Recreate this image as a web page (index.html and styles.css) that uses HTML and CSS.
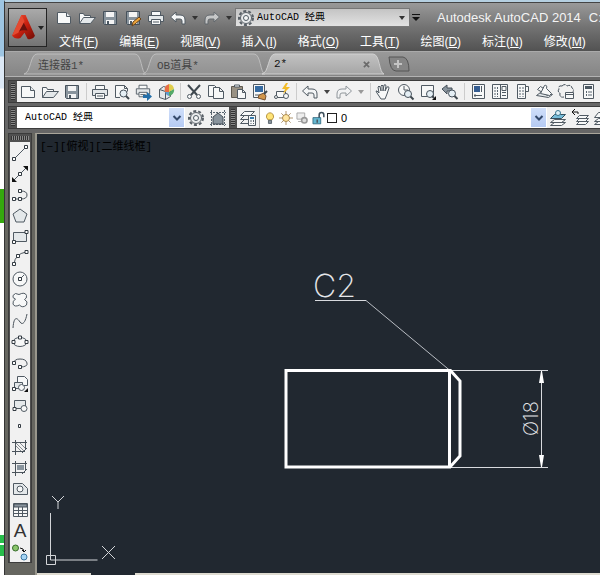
FILE: index.html
```html
<!DOCTYPE html>
<html lang="zh-CN">
<head>
<meta charset="utf-8">
<title>Autodesk AutoCAD 2014</title>
<link rel="stylesheet" href="styles.css">
</head>
<body>
<svg class="sprite" aria-hidden="true">
  <defs>
    <linearGradient id="red" x1="0" y1="0" x2="1" y2="1"><stop offset="0" stop-color="#f0563a"/><stop offset=".5" stop-color="#c9200f"/><stop offset="1" stop-color="#6e0c06"/></linearGradient>
    <linearGradient id="tabfill" x1="0" y1="0" x2="0" y2="1"><stop offset="0" stop-color="#a2a2a2"/><stop offset="1" stop-color="#929292"/></linearGradient>
    <linearGradient id="tabon" x1="0" y1="0" x2="0" y2="1"><stop offset="0" stop-color="#c2c2c2"/><stop offset="1" stop-color="#a6a6a6"/></linearGradient>
  </defs>
  <symbol id="new" viewBox="0 0 18 18"><path class="paper" d="M2.500 3.500h9l4 4v7h-13z"/><path class="fill-soft" d="M11.500 3.500v4h4"/></symbol>
  <symbol id="open" viewBox="0 0 18 18"><path class="paper" d="M1.500 14.500v-10h4l1 2h6v3"/><path class="fill-soft" d="M1.500 14.500l4-6h12l-5 6z"/></symbol>
  <symbol id="save" viewBox="0 0 18 18"><path class="metal" d="M2.500 2.500h13v13h-12l-1-1z"/><path class="plain" d="M5 3h8v5H5zM5 11h8v4H5z"/><path class="dark" d="M6 12h2v3H6z"/></symbol>
  <symbol id="saveas" viewBox="0 0 18 18"><use href="#save"/><path d="M8 17l1-4 6-5 2 2-6 5z" fill="#eda63c" stroke="#694116"/></symbol>
  <symbol id="print" viewBox="0 0 18 18"><path class="paper" d="M4.500 6V2.500h9V6"/><path class="fill-soft" d="M1.500 6.500h15v6h-15z"/><path class="paper" d="M4.500 10.500h9v5h-9z"/><path class="line" d="M6 13h6"/></symbol>
  <symbol id="preview" viewBox="0 0 18 18"><path class="paper" d="M2.500 14.500v-12h9l3 3v3M7 14.500H2.500M11.500 2.500v3h3"/><circle class="lens" cx="10.500" cy="10.500" r="3.500"/><path class="thick" d="M13 13l3 3"/></symbol>
  <symbol id="publish" viewBox="0 0 18 18"><use href="#print" width="16" height="16"/><path d="M8 12h4V9l5 4.500-5 4.500v-3H8z" fill="#246fa9"/></symbol>
  <symbol id="dwf" viewBox="0 0 18 18"><path class="fill-soft" d="M2.500 6.500l4-3 7 2v8l-5 3-6-2zM2.500 6.500l6 2v8"/><path d="M12 1a6 6 0 0 0-4 8h4z" fill="#e86e45"/><path d="M12 1a6 6 0 0 1 5 5l-5 3z" fill="#e0ce4c"/><path d="M17 6a6 6 0 0 1-5 7V9z" fill="#54aa69"/><path d="M8 9a6 6 0 0 0 4 4V9z" fill="#629dcd"/></symbol>
  <symbol id="cut" viewBox="0 0 18 18"><path class="thick" d="M3 2l9 10M15 2L6 12"/><circle class="paper" cx="4.500" cy="13.500" r="2"/><circle class="paper" cx="13.500" cy="13.500" r="2"/></symbol>
  <symbol id="copy" viewBox="0 0 18 18"><path class="paper" d="M1.500 2.500h6l3 3v8h-9z"/><path class="paper" d="M6.500 4.500h6l4 4v7h-10zM12.500 4.500v4h4"/></symbol>
  <symbol id="paste" viewBox="0 0 18 18"><path d="M2.500 3.500h11v11h-11z" fill="#9a9284" stroke="#5f5a50"/><path class="paper" d="M5.500 2h5v2h-5zM8.500 6.500h5l3 3v6h-8zM13.500 6.500v3h3"/></symbol>
  <symbol id="match" viewBox="0 0 18 18"><path class="paper" d="M2.500 1.500h11v13h-11z"/><path d="M4 3h8v6H4z" fill="#376ca3"/><path class="line" d="M4 12h4"/><path d="M8 12l5-2 2 3-1 4-7-2z" fill="#d1964b" stroke="#745030"/><path class="thick" d="M13 11l3-3"/></symbol>
  <symbol id="block" viewBox="0 0 18 18"><path class="paper" d="M3.500 8.500h9v6h-9z"/><circle class="paper" cx="13" cy="13" r="2.500"/><circle class="paper" cx="3" cy="14" r="1.500"/><path d="M13 0l-4 6h3l-2 5 7-7h-4l2-4z" fill="#f2bb27"/></symbol>
  <symbol id="undo" viewBox="0 0 18 18"><path class="arrow" d="M1.500 8L7 3v3h4q5 0 5 5v4h-3v-3q0-2-2-2H7v3z"/></symbol>
  <symbol id="redo" viewBox="0 0 18 18"><path class="arrow" d="M16.500 8L11 3v3H7q-5 0-5 5v4h3v-3q0-2 2-2h4v3z"/></symbol>
  <symbol id="pan" viewBox="0 0 18 18"><path class="paper" d="M6 16l-4-6q-2-3 0-2l2 2L3 4q1-2 2 0l1 4V3q1-2 2 0v5l1-6q2-1 2 1l-1 5 2-4q2-1 2 1l-2 6-2 5z"/></symbol>
  <symbol id="zoomrt" viewBox="0 0 18 18"><circle class="paper" cx="7" cy="7" r="5.500"/><path class="line" d="M7 3v4h4"/><circle class="lens" cx="11" cy="11" r="3.500"/><path class="thick" d="M13.500 13.500l3 3"/></symbol>
  <symbol id="zoomwin" viewBox="0 0 18 18"><path class="paper" d="M2.500 2.500h12v11h-12z"/><circle class="lens" cx="11" cy="11" r="3.500"/><path class="thick" d="M13 13l2 2"/><path class="black" d="M17 13v4h-4z"/></symbol>
  <symbol id="zoomprev" viewBox="0 0 18 18"><path class="metal" d="M1 6l5-4v3h5v3H6v3z"/><circle class="lens" cx="11" cy="10.500" r="3.500"/><path class="thick" d="M13.500 13l3 3"/></symbol>
  <symbol id="props" viewBox="0 0 18 18"><path class="paper" d="M3.500 1.500h12v14h-12z"/><path d="M5 3h6v6H5z" fill="#345c91"/><path class="line" d="M12.500 3v6M5 12.500h8M6 11v3"/></symbol>
  <symbol id="center" viewBox="0 0 18 18"><path class="paper" d="M1.500 1.500h15v14h-15zM9.500 2v13"/><path class="dots" d="M4 4v10M6.500 4v10"/><path class="line" d="M11 3.500h4v4h-4zM11 9.500h4M11 12.500h4"/></symbol>
  <symbol id="palette" viewBox="0 0 18 18"><path class="paper" d="M4.500 1.500h8v14h-8zM12.500 3.500h3v5h-3"/><path class="dots" d="M7 4v10M10 4v10"/></symbol>
  <symbol id="sheets" viewBox="0 0 18 18"><path class="fill-soft" d="M1.500 12.500l12 2 4-3-12-2z"/><path class="paper" d="M2.500 6.500l3-3 9 6-2 3z"/><path class="paper" d="M5.500 10.500l4-8q3-1 2 3l5 5-2 2z"/></symbol>
  <symbol id="markup" viewBox="0 0 18 18"><path class="cloud" d="M5 3q3-3 5 0 4-2 5 2 3 2 0 5M5 3Q1 2 2 6q-2 3 1 4-1 5 4 4"/><path class="paper" d="M8.500 9.500h8v6h-8zM8.500 11.500h8"/></symbol>
  <symbol id="calc" viewBox="0 0 18 18"><path class="paper" d="M4.500 1.500h10v14h-10z"/><path class="dark" d="M6 3h7v3H6z"/><path class="dots" d="M7.500 8v6M10 8v6M12 8v6"/></symbol>
  <symbol id="gear" viewBox="0 0 18 18"><circle class="teeth" cx="9" cy="9" r="7"/><circle class="ring" cx="9" cy="9" r="5.500"/><circle class="paper" cx="9" cy="9" r="2.500"/></symbol>
  <symbol id="house" viewBox="0 0 18 18"><path class="dots" d="M1 3.500h16M1 15.500h16M2.500 1v16M15.500 1v16"/><path class="metal" d="M4 8l5-4 5 4v7H4z"/></symbol>
  <symbol id="layers" viewBox="0 0 18 18"><path class="paper" d="M1.500 6.500l4-4h10l-4 4z"/><path class="line" d="M9 10.500H1.500l4-4M9 14.500H1.500l4-4"/><path class="paper" d="M9.500 6.500h7v10h-7z"/><path d="M11 8h4v2h-4z" fill="#387cad"/><path class="dots" d="M12 11v4M14.500 11v4"/></symbol>
  <symbol id="bulb" viewBox="0 0 18 18"><path d="M6.500 11.500Q3 8 5 4.500 9 0 13 4.500q2 3.500-1.500 7z" fill="#ffe478" stroke="#a47c28"/><path class="metal" d="M7 12h4v4H7z"/></symbol>
  <symbol id="sun" viewBox="0 0 18 18"><path d="M9 0v18M0 9h18M3 3l12 12M15 3L3 15" stroke="#987846"/><circle cx="9" cy="9" r="4.500" fill="#ffe6a0" stroke="#9c7535"/></symbol>
  <symbol id="freeze" viewBox="0 0 18 18"><path d="M2.500 2.500h10v8h-10zM4 13.500h6" fill="#eee" stroke="#999"/><circle cx="12" cy="12" r="3.500" fill="#ddd" stroke="#999" stroke-width="2"/></symbol>
  <symbol id="lock" viewBox="0 0 18 18"><path d="M10.500 9V5q0-3 3-3t3 3v3" fill="none" stroke="#41525e" stroke-width="2"/><path d="M2.500 8.500h10v8h-10z" fill="#65b8d1" stroke="#285f77"/><path class="dark" d="M7 11h2v4H7z"/></symbol>
  <symbol id="laycur" viewBox="0 0 18 18"><path class="paper" d="M1.500 16.500l4-3h11l-4 3zM1.500 13.500l4-3h11l-4 3z"/><path d="M1.500 9.500l4-4h11l-4 4z" fill="#77bcd8" stroke="#34505f"/><circle cx="9" cy="4" r="2.500" fill="#ddeff6" stroke="#397790"/></symbol>
  <symbol id="layprev" viewBox="0 0 18 18"><path class="paper" d="M5.500 15.500l3-3h9l-3 3zM5.500 12.500l3-3h9l-3 3zM5.500 9.500l3-3h9l-3 3z"/><path d="M7 5V3H2M4 0L1 3l3 3" fill="none" stroke="#111"/></symbol>
  <symbol id="laystate" viewBox="0 0 18 18"><path class="paper" d="M1.500 15.500l4-3h11l-4 3zM1.500 12.500l4-3h11l-4 3zM1.500 8.500l4-5h11l-4 5z"/></symbol>
  <symbol id="line" viewBox="0 0 18 18"><path class="line" d="M3 15L15 3"/><path class="node" d="M1.500 13.500h3v3h-3zM13.500 1.500h3v3h-3z"/></symbol>
  <symbol id="xline" viewBox="0 0 18 18"><path class="line" d="M3 15L15 3"/><path class="black" d="M1 12v5h5zM12 1h5v5z"/><path class="node" d="M7.500 7.500h3v3h-3z"/></symbol>
  <symbol id="pline" viewBox="0 0 18 18"><path class="line2" d="M3 13h7q6 0 6-4t-6-4"/><path class="node" d="M1.500 11.500h3v3h-3zM7.500 11.500h3v3h-3zM7.500 3.500h3v3h-3z"/></symbol>
  <symbol id="polygon" viewBox="0 0 18 18"><path class="fill-soft" d="M9 2l7 5-3 8H5L2 7z"/></symbol>
  <symbol id="rect" viewBox="0 0 18 18"><path class="fill-soft" d="M2.500 4.500h13v9h-13z"/><path class="node" d="M1.500 12.500h3v3h-3zM14 2.500h3v3h-3z"/></symbol>
  <symbol id="arc" viewBox="0 0 18 18"><path class="line2" d="M3 15Q4 5 15 3"/><path class="node" d="M1.500 13.500h3v3h-3zM5.500 5.500h3v3h-3zM14 1.500h3v3h-3z"/></symbol>
  <symbol id="circle" viewBox="0 0 18 18"><circle class="paper" cx="9" cy="9" r="7"/><path class="line" d="M9 9l4-4"/><path class="node" d="M7.500 7.500h3v3h-3z"/></symbol>
  <symbol id="revcloud" viewBox="0 0 18 18"><path class="paper" d="M4.500 8Q1 7 2 4.500 4 1 8 3.500q6-3 7.500 1 .5 3-2 4 4 2 2 5.500-4 3.500-7 0-5 2.500-6.500-1-.5-3 2.500-5z"/></symbol>
  <symbol id="spline" viewBox="0 0 18 18"><path class="line2" d="M2 16C3 2 7 7 9 10s5 2 7-8"/></symbol>
  <symbol id="ellipse" viewBox="0 0 18 18"><ellipse class="paper" cx="9" cy="9" rx="7" ry="4.500"/><path class="node" d="M1 7.500h3v3H1zM14 7.500h3v3h-3zM7.500 3h3v3h-3z"/></symbol>
  <symbol id="ellarc" viewBox="0 0 18 18"><path class="line2" d="M3 9q0-4 6-4t7 4-7 4"/><path class="node" d="M1.500 7.500h3v3h-3zM7.500 11.500h3v3h-3z"/></symbol>
  <symbol id="insert" viewBox="0 0 18 18"><path class="paper" d="M6.500 7V1.500h7l3 3v6h-4"/><path class="fill-soft" d="M3.500 7.500h8v6h-8z"/><path class="node" d="M1.500 12.500h3v3h-3z"/><circle class="paper" cx="10.500" cy="12.500" r="3"/><path class="black" d="M17 13v4h-4z"/></symbol>
  <symbol id="mkblock" viewBox="0 0 18 18"><path class="fill-soft" d="M3.500 4.500h11v8h-11z"/><path class="node" d="M2 11.500h3v3H2z"/><circle class="paper" cx="13" cy="12.500" r="3"/></symbol>
  <symbol id="point" viewBox="0 0 18 18"><path class="node" d="M7.500 7.500h2v3h-2z"/></symbol>
  <symbol id="hatch" viewBox="0 0 18 18"><path class="line2" d="M1 4.500h15M1 13.500h13M4.500 2v15M14.500 2v9"/><path class="hair" d="M5 8l5 5M5 5l8 8M9 5l5 5"/><path class="line2" d="M11 15l5-5"/></symbol>
  <symbol id="gradient" viewBox="0 0 18 18"><path d="M6 6h7v5H6z" fill="#89949d"/><path class="line2" d="M1 4.500h15M1 13.500h13M4.500 2v15M14.500 2v9"/><path class="line2" d="M11 15l5-5"/></symbol>
  <symbol id="region" viewBox="0 0 18 18"><path class="fill-soft" d="M2.500 3.500h9l5 5v6h-14z"/><circle class="paper" cx="9" cy="9" r="3"/></symbol>
  <symbol id="table" viewBox="0 0 18 18"><path class="paper" d="M2.500 2.500h14v13h-14z"/><path class="metal" d="M3 3h13v3H3z"/><path class="line" d="M2 9.500h14M2 12.500h14M7.500 6v9M11.500 6v9"/></symbol>
  <symbol id="addsel" viewBox="0 0 18 18"><circle cx="4.500" cy="5" r="3" fill="#8bc66c" stroke="#356c29"/><circle cx="13" cy="14" r="3" fill="#a6d4f3" stroke="#3b76a1"/><path d="M9 5q4 0 4 4M11 7l2 2 2-2" fill="none" stroke="#111"/></symbol>
  <symbol id="down" viewBox="0 0 8 8"><path d="M1 2h6L4 6z" fill="currentColor"/></symbol>
  <symbol id="more" viewBox="0 0 10 10"><path d="M1 1h8v1H1zM1 4h8L5 8z" fill="currentColor"/></symbol>
  <symbol id="chevron" viewBox="0 0 10 10"><path d="M1.500 3L5 6.500 8.500 3" fill="none" stroke="#34496b" stroke-width="2"/></symbol>
</svg>

<div class="desktop">
  <div class="backdrop"></div>
  <div class="window">
    <header class="titlebar">
      <button class="app" aria-label="应用程序菜单">
        <svg class="logo" viewBox="0 0 24 26"><path d="M10 1h4l9 20q-2 4-7 3l-3-6-4 5q-5 2-8-2z" fill="url(#red)"/><path d="M12 8l-5 9q4-2 9-1z" fill="#68120d"/><path d="M10 1L1 21l6-3 6-11z" fill="#e44a31"/></svg>
        <svg class="down"><use href="#down"/></svg>
      </button>
      <div class="head">
        <div class="quick">
          <button aria-label="新建"><svg><use href="#new"/></svg></button>
          <button aria-label="打开"><svg><use href="#open"/></svg></button>
          <button aria-label="保存"><svg><use href="#save"/></svg></button>
          <button aria-label="另存为"><svg><use href="#saveas"/></svg></button>
          <button aria-label="打印"><svg><use href="#print"/></svg></button>
          <button class="light" aria-label="放弃"><svg><use href="#undo"/></svg></button>
          <svg class="down"><use href="#down"/></svg>
          <button class="dim" aria-label="重做"><svg><use href="#redo"/></svg></button>
          <svg class="down"><use href="#down"/></svg>
          <div class="workspace">
            <svg><use href="#gear"/></svg>
            <select aria-label="工作空间"><option>AutoCAD 经典</option></select>
            <svg class="down"><use href="#down"/></svg>
          </div>
          <svg class="more"><use href="#more"/></svg>
          <span class="title">Autodesk AutoCAD 2014</span>
          <span class="title">C:</span>
        </div>
        <nav class="menu">
          <a href="#">文件(<u>F</u>)</a><a href="#">编辑(<u>E</u>)</a><a href="#">视图(<u>V</u>)</a><a href="#">插入(<u>I</u>)</a><a href="#">格式(<u>O</u>)</a><a href="#">工具(<u>T</u>)</a><a href="#">绘图(<u>D</u>)</a><a href="#">标注(<u>N</u>)</a><a href="#">修改(<u>M</u>)</a>
        </nav>
      </div>
    </header>

    <div class="tabs">
      <button class="tab"><svg viewBox="0 0 122 22" preserveAspectRatio="none"><path d="M0 21C7 20 6 1 13 1h98c7 0 6 19 11 20z" fill="url(#tabfill)" stroke="#bdbdbd"/></svg><span>连接器1*</span></button>
      <button class="tab"><svg viewBox="0 0 122 22" preserveAspectRatio="none"><path d="M0 21C7 20 6 1 13 1h98c7 0 6 19 11 20z" fill="url(#tabfill)" stroke="#bdbdbd"/></svg><span>OB道具*</span></button>
      <button class="tab on"><svg viewBox="0 0 122 22" preserveAspectRatio="none"><path d="M0 21C7 20 6 1 13 1h98c7 0 6 19 11 20z" fill="url(#tabon)" stroke="#d0d0d0"/></svg><span>2*</span><svg class="close" viewBox="0 0 8 8"><path d="M1 1l6 6M7 1L1 7" stroke="#6b6b6b" stroke-width="2"/></svg></button>
      <button class="add" aria-label="新图形"><svg viewBox="0 0 22 16"><path d="M1 1h14q6 1 6 14H8Q2 15 1 1z" fill="#858585" stroke="#555"/><path d="M10 4v8M6 8h8" stroke="#c4c4c4" stroke-width="2"/></svg></button>
    </div>

    <div class="bar">
      <i class="grip"></i>
      <div class="tools">
        <button aria-label="新建"><svg><use href="#new"/></svg></button>
        <button aria-label="打开"><svg><use href="#open"/></svg></button>
        <button aria-label="保存"><svg><use href="#save"/></svg></button>
        <i class="sep"></i>
        <button aria-label="打印"><svg><use href="#print"/></svg></button>
        <button aria-label="打印预览"><svg><use href="#preview"/></svg></button>
        <button aria-label="发布"><svg><use href="#publish"/></svg></button>
        <button aria-label="三维打印"><svg><use href="#dwf"/></svg></button>
        <i class="sep"></i>
        <button aria-label="剪切"><svg><use href="#cut"/></svg></button>
        <button aria-label="复制"><svg><use href="#copy"/></svg></button>
        <button aria-label="粘贴"><svg><use href="#paste"/></svg></button>
        <button aria-label="特性匹配"><svg><use href="#match"/></svg></button>
        <button aria-label="块编辑器"><svg><use href="#block"/></svg></button>
        <i class="sep"></i>
        <button aria-label="放弃"><svg><use href="#undo"/></svg></button>
        <svg class="down"><use href="#down"/></svg>
        <button class="dim" aria-label="重做"><svg><use href="#redo"/></svg></button>
        <svg class="down faint"><use href="#down"/></svg>
        <i class="sep"></i>
        <button aria-label="平移"><svg><use href="#pan"/></svg></button>
        <button aria-label="实时缩放"><svg><use href="#zoomrt"/></svg></button>
        <button aria-label="窗口缩放"><svg><use href="#zoomwin"/></svg></button>
        <button aria-label="缩放上一个"><svg><use href="#zoomprev"/></svg></button>
        <i class="sep"></i>
        <button aria-label="特性"><svg><use href="#props"/></svg></button>
        <button aria-label="设计中心"><svg><use href="#center"/></svg></button>
        <button aria-label="工具选项板"><svg><use href="#palette"/></svg></button>
        <button aria-label="图纸集"><svg><use href="#sheets"/></svg></button>
        <button aria-label="标记集"><svg><use href="#markup"/></svg></button>
        <button aria-label="计算器"><svg><use href="#calc"/></svg></button>
      </div>
    </div>

    <div class="bar second">
      <i class="grip"></i>
      <div class="combo space">
        <select aria-label="工作空间"><option>AutoCAD 经典</option></select>
        <span class="drop"><svg><use href="#chevron"/></svg></span>
      </div>
      <div class="tools">
        <button aria-label="工作空间设置"><svg><use href="#gear"/></svg></button>
        <button aria-label="我的工作空间"><svg><use href="#house"/></svg></button>
      </div>
      <i class="grip"></i>
      <div class="tools"><button aria-label="图层特性"><svg><use href="#layers"/></svg></button></div>
      <div class="combo layer">
        <svg><use href="#bulb"/></svg><svg><use href="#sun"/></svg><svg><use href="#freeze"/></svg><svg><use href="#lock"/></svg><i class="swatch"></i>
        <select aria-label="图层"><option>0</option></select>
        <span class="drop"><svg><use href="#chevron"/></svg></span>
      </div>
      <div class="tools end">
        <button aria-label="置为当前图层"><svg><use href="#laycur"/></svg></button>
        <button aria-label="上一个图层"><svg><use href="#layprev"/></svg></button>
        <button aria-label="图层状态"><svg><use href="#laystate"/></svg></button>
      </div>
    </div>

    <main class="work">
      <aside class="draw">
        <i class="grip"></i>
        <div class="stack">
          <button aria-label="直线"><svg><use href="#line"/></svg></button>
          <button aria-label="构造线"><svg><use href="#xline"/></svg></button>
          <button aria-label="多段线"><svg><use href="#pline"/></svg></button>
          <button aria-label="多边形"><svg><use href="#polygon"/></svg></button>
          <button aria-label="矩形"><svg><use href="#rect"/></svg></button>
          <button aria-label="圆弧"><svg><use href="#arc"/></svg></button>
          <button aria-label="圆"><svg><use href="#circle"/></svg></button>
          <button aria-label="修订云线"><svg><use href="#revcloud"/></svg></button>
          <button aria-label="样条曲线"><svg><use href="#spline"/></svg></button>
          <button aria-label="椭圆"><svg><use href="#ellipse"/></svg></button>
          <button aria-label="椭圆弧"><svg><use href="#ellarc"/></svg></button>
          <button aria-label="插入块"><svg><use href="#insert"/></svg></button>
          <button aria-label="创建块"><svg><use href="#mkblock"/></svg></button>
          <button aria-label="点"><svg><use href="#point"/></svg></button>
          <button aria-label="图案填充"><svg><use href="#hatch"/></svg></button>
          <button aria-label="渐变色"><svg><use href="#gradient"/></svg></button>
          <button aria-label="面域"><svg><use href="#region"/></svg></button>
          <button aria-label="表格"><svg><use href="#table"/></svg></button>
          <button class="letter" aria-label="多行文字">A</button>
          <button aria-label="添加选定对象"><svg><use href="#addsel"/></svg></button>
        </div>
      </aside>
      <section class="canvas">
        <p class="view">[−][俯视][二维线框]</p>
        <svg class="drawing">
          <g class="thin">
            <path d="M278 166.500h51"/><path class="slant" d="M329 166.500l84 70"/>
            <path d="M413 236.500h98M413 333.500h98M504.500 237v96"/>
          </g>
          <path class="arrowhead" d="M504 237h1l2 12h-5zM504 333h1l2-12h-5z"/>
          <g class="bold"><path d="M249 236.500h163.500v96.500H249zM413 236l10 11v75l-10 11"/></g>
          <text class="note" x="276" y="163">C2</text>
          <text class="dim-text" transform="translate(501 302) rotate(-90)">Ø18</text>
          <g class="ucs"><path d="M13.500 379v47h47M9.500 421.500h9v9h-9z"/><path d="M15 362l6 6 6-6M21 368v7M65 412l13 13M78 412l-13 13"/></g>
        </svg>
        <div class="sheetbar"><i></i><i></i></div>
      </section>
    </main>
  </div>
</div>
</body>
</html>
```
FILE: styles.css
```css
* { box-sizing: border-box; }
body { margin: 0; font-family: "Liberation Sans", "Noto Sans CJK SC", sans-serif; font-size: 12px; }
button { border: 0; padding: 0; background: none; color: inherit; font: inherit; }
select { appearance: none; border: 0; padding: 0; background: transparent; color: #000; font: 10px "Liberation Mono", "Noto Sans CJK SC", monospace; }
svg { display: block; flex: none; }
.sprite { position: absolute; width: 0; height: 0; }

.paper { fill: #f7f8f8; stroke: #505a63; }
.fill-soft { fill: #e4e8ea; stroke: #505a63; }
.metal { fill: #89949d; stroke: #46515b; }
.plain { fill: #f4f4f4; }
.dark { fill: #4c5862; }
.black { fill: #111; }
.line { fill: none; stroke: #505a63; }
.line2 { fill: none; stroke: #4a535b; }
.thick { fill: none; stroke: #3f484f; stroke-width: 2; }
.hair { stroke: #858b90; }
.lens { fill: #e5eff5; stroke: #46515b; }
.node { fill: #fff; stroke: #333b42; }
.dots { fill: none; stroke: #596570; stroke-width: 1; stroke-dasharray: 2 1; }
.teeth { fill: none; stroke: #596067; stroke-width: 2; stroke-dasharray: 3 2; }
.ring { fill: #e9ebec; stroke: #596067; }
.cloud { fill: none; stroke: #46515b; stroke-dasharray: 4 1; }
.arrow { fill: #f3f5f6; stroke: #505a63; }
.light .arrow { fill: #eee; stroke: #666; }
.dim { opacity: .6; }

.desktop { display: flex; height: 100vh; overflow: hidden; background: #fff; }
.backdrop {
  width: 4px;
  background: linear-gradient(#9ec5e2 0 56px, #dce8f5 57px 88px, #fff 89px 189px, #35a80e 189px 223px, #fff 223px 535px, #28bd4b 535px 543px, #fff 543px 545px, #28bd4b 545px 556px, #fff 556px);
}
.window { flex: 1; min-width: 0; display: flex; flex-direction: column; border-top: 2px solid #b5cfe0; border-left: 1px solid #353535; background: #666; }

.titlebar { display: flex; gap: 5px; padding: 5px 0 0 3px; border-top: 1px solid #444; background: linear-gradient(#999, #737373 50%, #525252); }
.app { flex: none; display: flex; align-items: center; justify-content: center; gap: 1px; width: 39px; height: 39px; border: 1px solid #242424; background: linear-gradient(#aaa, #737373); color: #222; }
.logo { width: 25px; height: 27px; }
.down { width: 8px; height: 8px; }
.head { flex: 1; min-width: 0; overflow: hidden; }
.quick { display: flex; align-items: center; height: 19px; color: #333; white-space: nowrap; }
.quick > * { flex: none; }
.quick button { width: 23px; }
.quick button svg, .tools button svg { width: 18px; height: 18px; margin: auto; }
.quick .light, .quick .dim { width: 22px; }
.quick > .down { margin: 0 2px; }
.workspace { display: flex; align-items: center; gap: 2px; width: 175px; height: 19px; padding: 0 3px 0 1px; border: 1px solid #777; background: linear-gradient(#c4c4c4, #e2e2e2); }
.workspace svg:first-child { width: 18px; height: 18px; }
.workspace select { flex: 1; min-width: 0; }
.more { width: 10px; height: 10px; margin-left: 1px; color: #111; }
.title { margin-left: 16px; color: #f4f4f4; font-size: 13px; }
.title + .title { margin-left: 8px; }
.menu { display: flex; gap: 21px; margin: 6px 0 0 7px; line-height: 18px; white-space: nowrap; }
.menu a { flex: none; color: #fff; text-decoration: none; }

.tabs { display: flex; align-items: flex-end; height: 26px; padding: 0 0 1px 19px; border-top: 1px solid #aaa; border-bottom: 1px solid #b2b2b2; background: linear-gradient(#999, #858585); }
.tab { position: relative; display: flex; align-items: center; justify-content: space-between; width: 122px; height: 22px; margin-right: -3px; padding: 0 17px 0 14px; color: #444; font: 11px "Liberation Mono", "Noto Sans CJK SC", monospace; }
.tab > svg:first-child { position: absolute; inset: 0; width: 100%; height: 100%; }
.tab span, .tab .close { position: relative; }
.tab.on { color: #111; padding-left: 12px; padding-right: 14px; }
.close { width: 7px; height: 7px; }
.add { margin: 0 0 3px 7px; }
.add svg { width: 22px; height: 16px; }

.bar { display: flex; height: 23px; margin: 3px 0 0 3px; border: 1px solid #3c3c3c; border-right: 0; background: #505050; }
.second { margin-bottom: 4px; }
.grip { flex: none; width: 8px; border: 2px solid #505050; background: repeating-linear-gradient(#333 0 1px, #888 1px 2px); }
.tools { display: flex; align-items: center; background: #f1f1f1; color: #444; }
.bar:not(.second) .tools { flex: 1; }
.tools button { flex: none; width: 22px; height: 21px; }
.tools .sep { width: 1px; height: 17px; margin: 0 2px 0 3px; background: #ccc; }
.tools > .down { margin: 0 2px; }
.tools .faint { color: #999; }
.combo { display: flex; align-items: center; background: #fff; }
.combo select { flex: 1; min-width: 0; height: 21px; }
.space { width: 168px; padding-left: 8px; }
.drop { display: flex; align-items: center; justify-content: center; width: 15px; height: 19px; margin-right: 1px; background: linear-gradient(#d0dffa, #b5caf3); }
.drop svg { width: 10px; height: 10px; }
.layer { flex: 1; gap: 2px; padding-left: 3px; border-left: 1px solid #aaa; }
.layer > svg { width: 14px; height: 14px; }
.swatch { width: 10px; height: 10px; border: 1px solid #222; }
.layer select { padding-left: 2px; font: 11px "Liberation Sans", sans-serif; }
.end { flex: none; width: 53px; overflow: hidden; }

.work { flex: 1; min-height: 0; display: flex; gap: 3px; align-items: stretch; padding-left: 3px; background: #666660; }
.draw { flex: none; align-self: flex-start; width: 24px; border: 1px solid #3c3c3c; background: #505050; }
.draw .grip { display: block; width: auto; height: 8px; background: repeating-linear-gradient(90deg, #333 0 1px, #888 1px 2px); }
.stack { display: flex; flex-direction: column; margin: 0 1px; background: #f1f1f1; }
.stack button { height: 21px; line-height: 21px; }
.stack svg { width: 18px; height: 18px; margin: auto; }
.stack .letter { color: #333; font-size: 19px; }
.canvas { position: relative; flex: 1; min-width: 0; overflow: hidden; border-top: 1px solid #aaa69b; border-left: 2px solid #98968c; background: #212830; }
.view { margin: 5px 3px; color: #000; font: 11px/16px "Liberation Mono", "Noto Sans CJK SC", monospace; }
.drawing { position: absolute; inset: 0; width: 100%; height: 100%; }
.thin { fill: none; stroke: #d8dade; }
.slant { stroke: #b9bdc3; }
.bold { fill: none; stroke: #fff; stroke-width: 3; }
.arrowhead { fill: #fff; }
.note, .dim-text { fill: #e4e6e9; font-family: Inter, Roboto, sans-serif; font-weight: 200; }
.note { font-size: 32px; }
.dim-text { font-size: 20px; }
.ucs { fill: none; stroke: #d3d5d8; }
.sheetbar { position: absolute; left: 0; right: 0; bottom: 0; display: flex; justify-content: space-between; height: 2px; }
.sheetbar i:first-child { width: 54px; background: #dedbd0; }
.sheetbar i:last-child { width: 465px; background: #dedbd0; }
```
